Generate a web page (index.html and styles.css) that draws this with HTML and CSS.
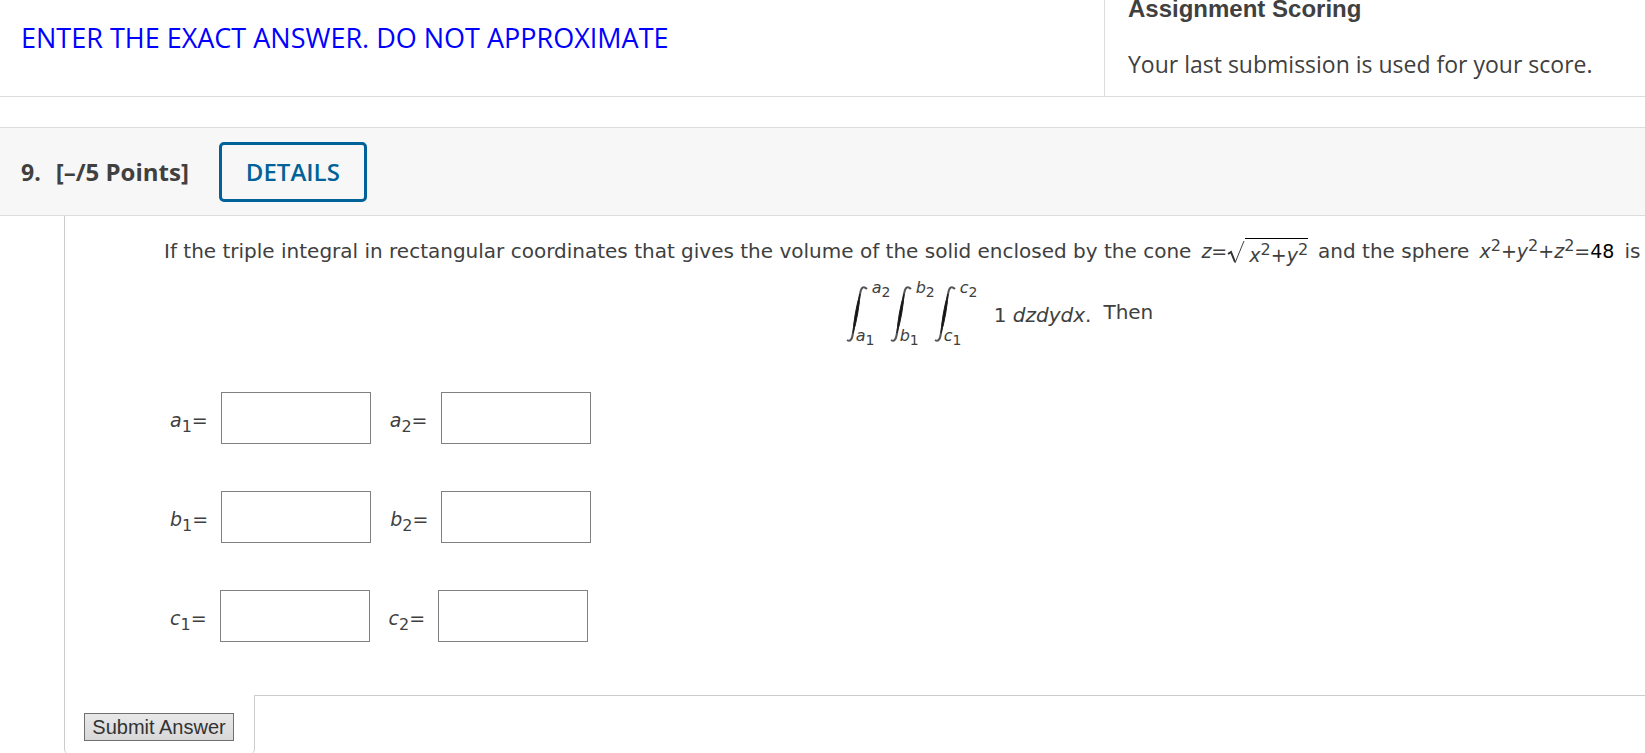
FILE: index.html
```html
<!DOCTYPE html>
<html lang="en">
<head>
    <meta charset="UTF-8">
    <title>Assignment</title>
    <link rel="stylesheet" href="styles.css">
</head>
<body>
    <div class="intro">
        <div class="instructions">ENTER THE EXACT ANSWER. DO NOT APPROXIMATE</div>
        <div class="scoring">
            <h3>Assignment Scoring</h3>
            <p>Your last submission is used for your score.</p>
        </div>
    </div>

    <div class="question-bar">
        <span class="number">9.</span>
        <span class="points">[–/5 Points]</span>
        <button type="button" class="details">DETAILS</button>
    </div>

    <form class="question">
        <div class="content">
            <p class="text">
                <span>If the triple integral in rectangular coordinates that gives the volume of the solid enclosed by the cone</span>
                <span class="math"><i>z</i>=<svg class="root" width="18" height="24" viewBox="0 0 18 24"><path d="M1 13L4 11L8 21" fill="none" stroke="#333" stroke-width="2"/><path d="M8 22L17 0" fill="none" stroke="#444" stroke-width="1"/></svg><span class="radicand"><i>x</i><sup>2</sup>+<i>y</i><sup>2</sup></span></span>
                <span>and the sphere</span>
                <span class="math"><i>x</i><sup>2</sup>+<i>y</i><sup>2</sup>+<i>z</i><sup>2</sup>=<span class="value">48</span></span>
                <span>is</span>
            </p>

            <div class="integral-row">
                <div class="integral">
                    <svg width="22" height="56" viewBox="0 0 22 56"><path d="M21 3C17 -1 15 2 14 8L7 47C6 54 4 56 1 54" fill="none" stroke="#555" stroke-width="2"/><path d="M14 8C13 22 11 34 7 47C8 33 10 21 14 8Z" fill="#111" stroke="#222" stroke-width="1"/></svg>
                    <div class="limits">
                        <span class="upper"><i>a</i><sub>2</sub></span>
                        <span class="lower"><i>a</i><sub>1</sub></span>
                    </div>
                </div>
                <div class="integral">
                    <svg width="22" height="56" viewBox="0 0 22 56"><path d="M21 3C17 -1 15 2 14 8L7 47C6 54 4 56 1 54" fill="none" stroke="#555" stroke-width="2"/><path d="M14 8C13 22 11 34 7 47C8 33 10 21 14 8Z" fill="#111" stroke="#222" stroke-width="1"/></svg>
                    <div class="limits">
                        <span class="upper"><i>b</i><sub>2</sub></span>
                        <span class="lower"><i>b</i><sub>1</sub></span>
                    </div>
                </div>
                <div class="integral">
                    <svg width="22" height="56" viewBox="0 0 22 56"><path d="M21 3C17 -1 15 2 14 8L7 47C6 54 4 56 1 54" fill="none" stroke="#555" stroke-width="2"/><path d="M14 8C13 22 11 34 7 47C8 33 10 21 14 8Z" fill="#111" stroke="#222" stroke-width="1"/></svg>
                    <div class="limits">
                        <span class="upper"><i>c</i><sub>2</sub></span>
                        <span class="lower"><i>c</i><sub>1</sub></span>
                    </div>
                </div>
                <span class="integrand">1 <i>dzdydx</i>.</span>
                <span class="then">Then</span>
            </div>

            <div class="answers">
                <div class="answer-row">
                    <label for="a1"><i>a</i><sub>1</sub>=</label><input type="text" id="a1">
                    <label for="a2"><i>a</i><sub>2</sub>=</label><input type="text" id="a2">
                </div>
                <div class="answer-row">
                    <label for="b1"><i>b</i><sub>1</sub>=</label><input type="text" id="b1">
                    <label for="b2"><i>b</i><sub>2</sub>=</label><input type="text" id="b2">
                </div>
                <div class="answer-row">
                    <label for="c1"><i>c</i><sub>1</sub>=</label><input type="text" id="c1">
                    <label for="c2"><i>c</i><sub>2</sub>=</label><input type="text" id="c2">
                </div>
            </div>
        </div>

        <div class="footer">
            <div class="submit-box">
                <button type="submit" class="submit">Submit Answer</button>
            </div>
            <div class="footer-line"></div>
        </div>
    </form>
</body>
</html>
```
FILE: styles.css
```css
*{box-sizing:border-box;}
body,h3,p{margin:0;}
body{
    overflow-x:hidden;
    background-color:#fff;
    color:#404040;
    font-family:"Open Sans",sans-serif;
}

/* top */
.intro{
    display:flex;
    height:97px;
    border-bottom:1px solid #ddd;
}
.instructions{
    flex:1;
    padding:20px 22px 0 21px;
    color:#00f;
    font-size:27px;
    line-height:36px;
}
.scoring{
    width:541px;
    padding-left:23px;
    border-left:1px solid #ddd;
}
.scoring h3{
    font-family:"Liberation Sans",Arial,sans-serif;
    font-size:24px;
    line-height:28px;
    margin-top:-5px;
}
.scoring p{
    margin-top:23px;
    font-size:23px;
    line-height:36px;
}

/* question header */
.question-bar{
    display:flex;
    align-items:center;
    height:89px;
    margin-top:30px;
    padding-left:21px;
    border-top:1px solid #ddd;
    border-bottom:1px solid #ddd;
    background-color:#f7f7f7;
    font-size:24px;
    font-weight:bold;
}
.number{font-size:23px;}
.points{margin-left:15px;}
.details{
    width:148px;
    height:60px;
    margin-left:30px;
    border:3px solid #006298;
    border-radius:5px;
    background-color:#f7f7f7;
    color:#006298;
    font-family:"Open Sans",sans-serif;
    font-size:24px;
    font-weight:600;
}

/* question body */
.question{
    margin-left:64px;
    font-family:Verdana,"DejaVu Sans",sans-serif;
    font-size:20px;
}
.content{
    min-height:479px;
    padding:20px 0 0 99px;
    border-left:1px solid #ccc;
}
.text{
    display:flex;
    gap:10px;
    line-height:30px;
    white-space:nowrap;
}
.math,
.answer-row label{font-size:19px;}
sup,sub{
    font-size:16px;
    line-height:0;
}
.root{vertical-align:-7px;}
.radicand{
    display:inline-block;
    padding:4px 0 0 4px;
    border-top:1px solid #000;
    line-height:24px;
    vertical-align:-4px;
}
.value{color:#000;}

.integral-row{
    display:flex;
    height:70px;
    margin-top:11px;
    padding-left:190px;
    justify-content:center;
}
.integral{
    display:flex;
    width:44px;
    height:68px;
}
.integral svg{flex:none;margin-top:8px;}
.limits{
    display:flex;
    flex-direction:column;
    justify-content:space-between;
    font-size:16px;
    line-height:20px;
}
.limits sub{font-size:14px;}
.upper{margin-left:4px;}
.lower{margin-left:-12px;}
.integrand{margin-left:16px;padding-top:25px;}
.then{margin-left:12px;padding-top:22px;}

.answers{
    display:flex;
    flex-direction:column;
    gap:47px;
    margin-top:44px;
    padding-left:6px;
}
.answer-row{
    display:flex;
    align-items:center;
}
.answer-row label{padding-top:4px;}
.answer-row input{
    width:150px;
    height:52px;
    margin:0 19px 0 13px;
    padding:0 8px;
    border:1px solid #808080;
    font-size:20px;
}

/* submit */
.footer{display:flex;}
.submit-box{
    width:191px;
    height:59px;
    padding:18px 0 0 19px;
    border:solid #ccc;
    border-width:0 1px;
    border-radius:0 0 5px 5px;
}
.footer-line{
    flex:1;
    border-top:1px solid #ccc;
}
.submit{
    width:150px;
    height:28px;
    padding:0;
    border:1px solid #707070;
    background:linear-gradient(#e8e8e8,#d8d8d8);
    color:#333;
    font-family:"Liberation Sans",Arial,sans-serif;
    font-size:20px;
    line-height:26px;
}
```
